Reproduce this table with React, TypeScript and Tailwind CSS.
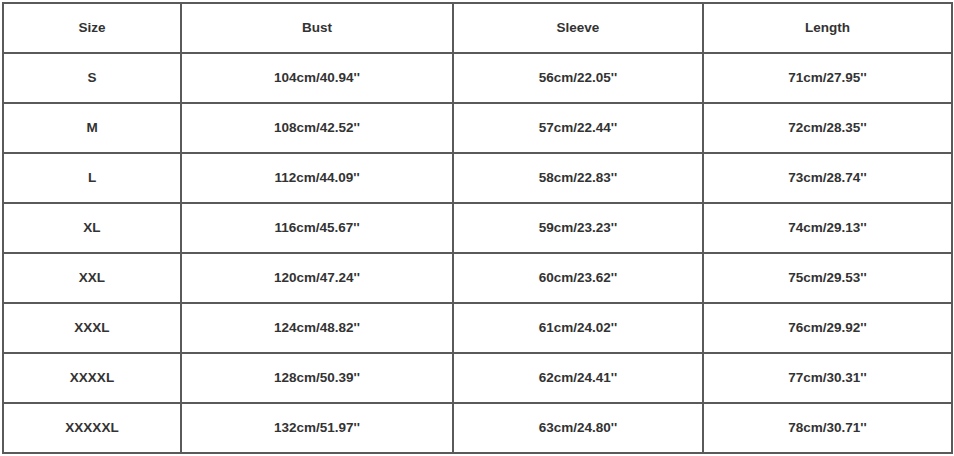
import React from "react";

const rows = [
  ["S", "104cm/40.94''", "56cm/22.05''", "71cm/27.95''"],
  ["M", "108cm/42.52''", "57cm/22.44''", "72cm/28.35''"],
  ["L", "112cm/44.09''", "58cm/22.83''", "73cm/28.74''"],
  ["XL", "116cm/45.67''", "59cm/23.23''", "74cm/29.13''"],
  ["XXL", "120cm/47.24''", "60cm/23.62''", "75cm/29.53''"],
  ["XXXL", "124cm/48.82''", "61cm/24.02''", "76cm/29.92''"],
  ["XXXXL", "128cm/50.39''", "62cm/24.41''", "77cm/30.31''"],
  ["XXXXXL", "132cm/51.97''", "63cm/24.80''", "78cm/30.71''"],
];

const header = ["Size", "Bust", "Sleeve", "Length"];

const Cell: React.FC<{ children: React.ReactNode }> = ({ children }) => (
  <div className="flex h-[48px] items-center justify-center bg-white">{children}</div>
);

export default function App() {
  return (
    <div className="h-[456px] w-[954px] bg-white pl-[2px] pt-[2px]">
      <div
        className="grid w-fit grid-cols-[176px_270px_248px_247px] gap-[2px] border-2 border-[#5a5a5a] bg-[#5a5a5a] text-[13.5px] font-bold text-[#333]"
        style={{ fontFamily: '"Liberation Sans", Arial, sans-serif' }}
      >
        {header.map((h) => (
          <Cell key={h}>{h}</Cell>
        ))}
        {rows.map((r) =>
          r.map((v, i) => <Cell key={r[0] + i}>{v}</Cell>)
        )}
      </div>
    </div>
  );
}
